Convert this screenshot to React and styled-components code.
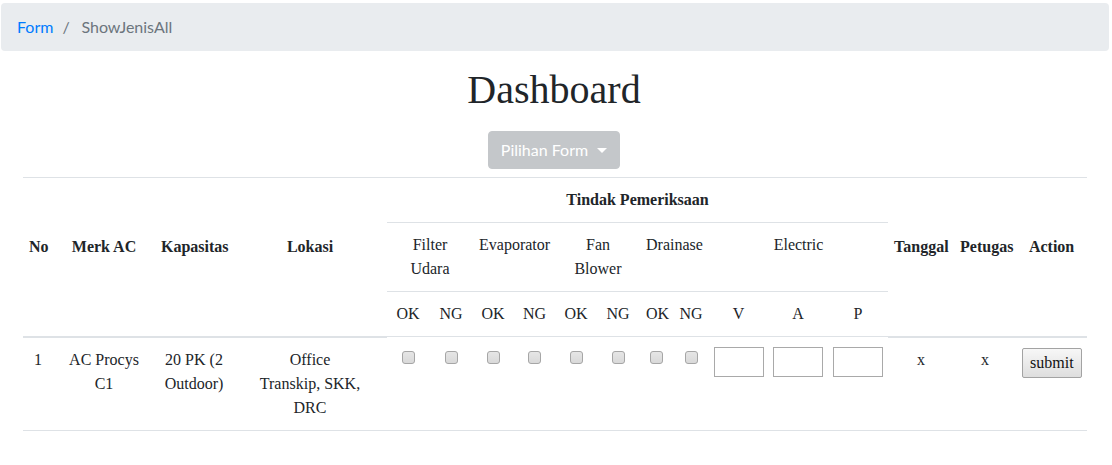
import React from "react";
import styled, { createGlobalStyle } from "styled-components";

const GlobalStyle = createGlobalStyle`
  html, body { margin: 0; padding: 0; background: #fff; }
  body {
    font-family: "Liberation Serif", "Times New Roman", serif;
    color: #212529;
  }
  * { box-sizing: border-box; }
`;

const Page = styled.div`
  padding: 3px 3px 0 1px;
`;

const Breadcrumb = styled.ol`
  display: flex;
  align-items: center;
  margin: 0;
  padding: 12px 16px;
  list-style: none;
  background: #e9ecef;
  border-radius: 4px;
  font-family: "Lato", "Liberation Sans", sans-serif;
  font-size: 16px;
  line-height: 24px;
`;

const Crumb = styled.li`
  color: ${(p) => (p.$active ? "#6c757d" : "#007bff")};
`;

const Sep = styled.li`
  color: #6c757d;
  margin: 0 8px 0 9px;
  width: 11px;
`;

const Main = styled.main`
  padding: 0 24px 0 22px;
`;

const Title = styled.h1`
  margin: 15px 0 17px;
  text-align: center;
  font-size: 40px;
  line-height: 48px;
  font-weight: normal;
  color: #212529;
`;

const Toolbar = styled.div`
  display: flex;
  justify-content: center;
  margin-bottom: 8px;
`;

const DropButton = styled.button`
  display: inline-flex;
  align-items: center;
  justify-content: center;
  height: 38px;
  padding: 6px 12px;
  border: 1px solid #c4c7ca;
  border-radius: 4px;
  background: #c4c7ca;
  color: #fff;
  font-family: "Lato", "Liberation Sans", sans-serif;
  font-size: 16px;
  line-height: 24px;
  white-space: nowrap;
  &::after {
    content: "";
    display: inline-block;
    margin-left: 9px;
    border-top: 5px solid #fff;
    border-left: 5px solid transparent;
    border-right: 5px solid transparent;
  }
`;

const Table = styled.table`
  width: 1064px;
  table-layout: fixed;
  border-collapse: collapse;
  font-size: 16px;
  line-height: 24px;
  color: #212529;
`;

const Col = styled.col`
  width: ${(p) => p.$w}px;
`;

const Th = styled.th`
  padding: ${(p) => (p.$tall ? "10px 6px 30px" : "10px 6px")};
  border-top: 1px solid #dee2e6;
  border-bottom: ${(p) => (p.$tall ? "2px solid #dee2e6" : "0")};
  font-weight: ${(p) => (p.$plain ? "normal" : "bold")};
  vertical-align: ${(p) => (p.$tall ? "middle" : "top")};
  text-align: center;
`;

const Td = styled.td`
  padding: ${(p) => (p.$tight ? "10px 4px" : "10px 6px")};
  border-top: 1px solid #dee2e6;
  border-bottom: 1px solid #dee2e6;
  vertical-align: top;
  text-align: center;
`;

const Wrap = styled.span`
  display: inline-block;
  max-width: ${(p) => p.$max}px;
`;

const Check = styled.input.attrs({ type: "checkbox" })`
  appearance: none;
  display: block;
  width: 13px;
  height: 13px;
  margin: 4px auto 0;
  border: 1px solid #a6a6a6;
  border-radius: 3px;
  background: linear-gradient(#e6e6e6, #d9d9d9);
`;

const NumInput = styled.input.attrs({ type: "text" })`
  display: block;
  width: 50px;
  height: 30px;
  margin: 0 auto;
  border: 1px solid #a9a9a9;
  background: #fff;
`;

const SubmitButton = styled.button`
  height: 30px;
  padding: 0 7px;
  border: 1px solid #a3a3a3;
  border-radius: 2px;
  background: linear-gradient(#f7f7f7, #dedede);
  font-family: "Liberation Serif", serif;
  font-size: 16px;
  color: #111;
`;

const widths = [30, 102, 78, 154, 42, 44, 40, 43, 40, 44, 33, 36, 59, 60, 60, 66, 62, 71];
const groups = [
  { label: "Filter Udara", span: 2 },
  { label: "Evaporator", span: 2 },
  { label: "Fan Blower", span: 2 },
  { label: "Drainase", span: 2 },
  { label: "Electric", span: 3 },
];
const subs = ["OK", "NG", "OK", "NG", "OK", "NG", "OK", "NG", "V", "A", "P"];

export default function App() {
  return (
    <>
      <GlobalStyle />
      <Page>
        <Breadcrumb>
          <Crumb>Form</Crumb>
          <Sep>/</Sep>
          <Crumb $active>ShowJenisAll</Crumb>
        </Breadcrumb>
        <Main>
          <Title>Dashboard</Title>
          <Toolbar>
            <DropButton>Pilihan Form</DropButton>
          </Toolbar>
          <Table>
            <colgroup>
              {widths.map((w, i) => (
                <Col key={i} $w={w} />
              ))}
            </colgroup>
            <thead>
              <tr>
                <Th rowSpan={3} $tall>No</Th>
                <Th rowSpan={3} $tall>Merk AC</Th>
                <Th rowSpan={3} $tall>Kapasitas</Th>
                <Th rowSpan={3} $tall>Lokasi</Th>
                <Th colSpan={11}>Tindak Pemeriksaan</Th>
                <Th rowSpan={3} $tall>Tanggal</Th>
                <Th rowSpan={3} $tall>Petugas</Th>
                <Th rowSpan={3} $tall>Action</Th>
              </tr>
              <tr>
                {groups.map((g, i) => (
                  <Th key={i} colSpan={g.span} $plain>
                    {g.label}
                  </Th>
                ))}
              </tr>
              <tr>
                {subs.map((s, i) => (
                  <Th key={i} $plain>
                    {s}
                  </Th>
                ))}
              </tr>
            </thead>
            <tbody>
              <tr>
                <Td>1</Td>
                <Td>AC Procys C1</Td>
                <Td>20 PK (2 Outdoor)</Td>
                <Td>
                  <Wrap $max={104}>Office Transkip, SKK, DRC</Wrap>
                </Td>
                {Array.from({ length: 8 }).map((_, i) => (
                  <Td key={i}>
                    <Check />
                  </Td>
                ))}
                {Array.from({ length: 3 }).map((_, i) => (
                  <Td key={"e" + i} $tight>
                    <NumInput />
                  </Td>
                ))}
                <Td>x</Td>
                <Td>x</Td>
                <Td>
                  <SubmitButton>submit</SubmitButton>
                </Td>
              </tr>
            </tbody>
          </Table>
        </Main>
      </Page>
    </>
  );
}
